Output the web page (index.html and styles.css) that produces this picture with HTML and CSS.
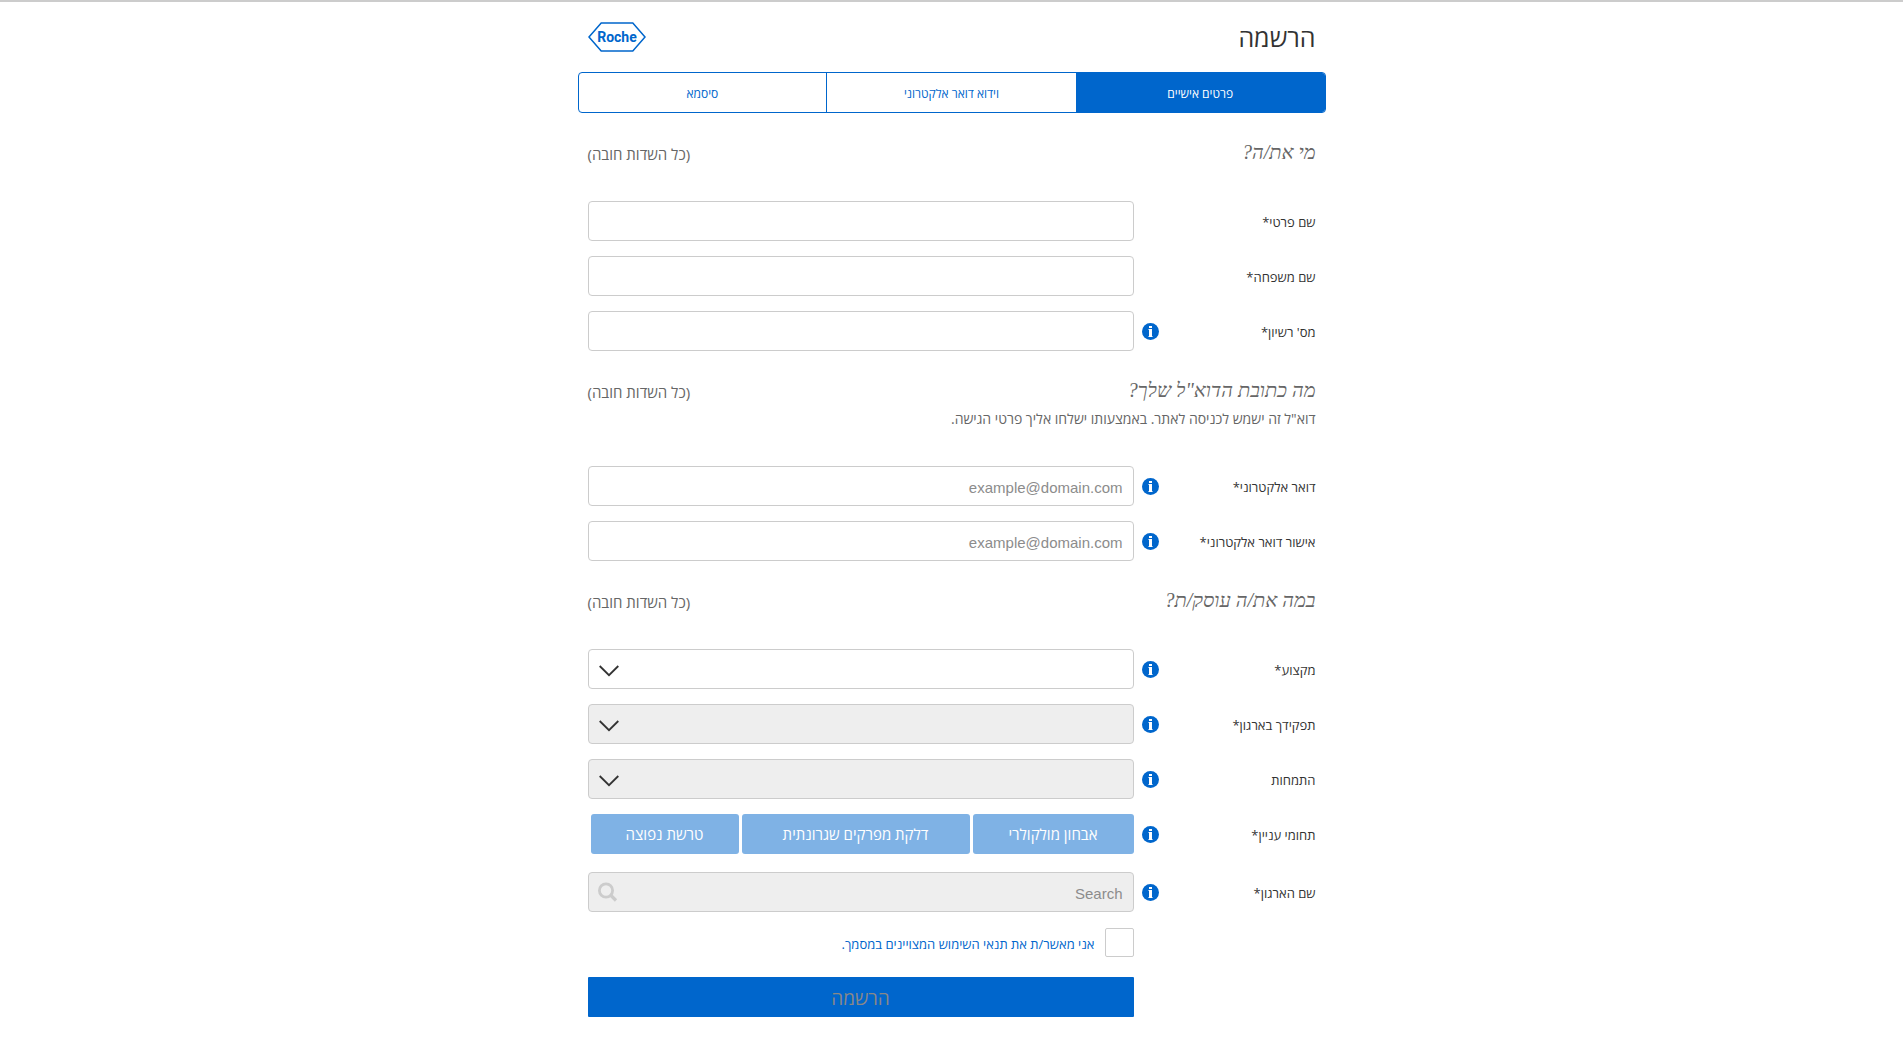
FILE: index.html
```html
<!DOCTYPE html>
<html lang="he" dir="rtl">
<head>
<meta charset="utf-8">
<meta name="viewport" content="width=device-width, initial-scale=1">
<title>הרשמה</title>
<link rel="stylesheet" href="styles.css">
</head>
<body>
<svg class="sprite" aria-hidden="true">
  <symbol id="info" viewBox="0 0 17 17">
    <circle cx="8.5" cy="8.5" r="8.5" fill="#0066cc"/>
    <path fill="#fff" d="M7 3h3v2H7zM6.500 6H10V13h.5v1H6.500v-1H7V7h-.5z"/>
  </symbol>
  <symbol id="arrow" viewBox="0 0 20 12">
    <path d="M.7 1 10 10.200 19.300 1" fill="none" stroke="#333" stroke-width="1.800"/>
  </symbol>
</svg>
<main class="page">
  <header class="top">
    <h1 class="title">הרשמה</h1>
    <svg class="logo" viewBox="0 0 58 30" role="img" aria-label="Roche">
      <path d="M1 15 13.200 1H44.800L57 15 44.800 29H13.200Z" fill="#fff" stroke="#0066cc" stroke-width="1.500"/>
      <text class="logo-text" x="29" y="20" text-anchor="middle" direction="ltr">Roche</text>
    </svg>
  </header>

  <ol class="steps">
    <li class="step step-active" aria-current="step">פרטים אישיים</li>
    <li class="step">וידוא דואר אלקטרוני</li>
    <li class="step">סיסמא</li>
  </ol>

  <form class="form">
    <section>
      <div class="section-head">
        <h2 class="section-title">מי את/ה?</h2>
        <span class="note">(כל השדות חובה)</span>
      </div>
      <div class="fields">
        <div class="row">
          <div class="row-label"><label for="first">שם פרטי*</label></div>
          <input class="control" id="first" type="text">
        </div>
        <div class="row">
          <div class="row-label"><label for="last">שם משפחה*</label></div>
          <input class="control" id="last" type="text">
        </div>
        <div class="row">
          <div class="row-label"><label for="license">מס' רשיון*</label><svg class="info"><use href="#info"/></svg></div>
          <input class="control" id="license" type="text">
        </div>
      </div>
    </section>

    <section>
      <div class="section-head">
        <h2 class="section-title">מה כתובת הדוא"ל שלך?</h2>
        <span class="note">(כל השדות חובה)</span>
        <p class="section-desc">דוא"ל זה ישמש לכניסה לאתר. באמצעותו ישלחו אליך פרטי הגישה.</p>
      </div>
      <div class="fields">
        <div class="row">
          <div class="row-label"><label for="email">דואר אלקטרוני*</label><svg class="info"><use href="#info"/></svg></div>
          <input class="control" id="email" type="email" placeholder="example@domain.com">
        </div>
        <div class="row">
          <div class="row-label"><label for="email2">אישור דואר אלקטרוני*</label><svg class="info"><use href="#info"/></svg></div>
          <input class="control" id="email2" type="email" placeholder="example@domain.com">
        </div>
      </div>
    </section>

    <section>
      <div class="section-head">
        <h2 class="section-title">במה את/ה עוסק/ת?</h2>
        <span class="note">(כל השדות חובה)</span>
      </div>
      <div class="fields">
        <div class="row">
          <div class="row-label"><label for="job">מקצוע*</label><svg class="info"><use href="#info"/></svg></div>
          <div class="control-wrap">
            <select class="control" id="job"><option></option></select>
            <svg class="arrow"><use href="#arrow"/></svg>
          </div>
        </div>
        <div class="row">
          <div class="row-label"><label for="role">תפקידך בארגון*</label><svg class="info"><use href="#info"/></svg></div>
          <div class="control-wrap">
            <select class="control" id="role" disabled><option></option></select>
            <svg class="arrow"><use href="#arrow"/></svg>
          </div>
        </div>
        <div class="row">
          <div class="row-label"><label for="field">התמחות</label><svg class="info"><use href="#info"/></svg></div>
          <div class="control-wrap">
            <select class="control" id="field" disabled><option></option></select>
            <svg class="arrow"><use href="#arrow"/></svg>
          </div>
        </div>
        <div class="row row-chips">
          <div class="row-label"><span class="label-text" id="interests">תחומי עניין*</span><svg class="info"><use href="#info"/></svg></div>
          <div class="chips" role="group" aria-labelledby="interests">
            <button class="chip" type="button">אבחון מולקולרי</button>
            <button class="chip" type="button">דלקת מפרקים שגרונתית</button>
            <button class="chip" type="button">טרשת נפוצה</button>
          </div>
        </div>
        <div class="row">
          <div class="row-label"><label for="org">שם הארגון*</label><svg class="info"><use href="#info"/></svg></div>
          <div class="control-wrap">
            <input class="control" id="org" type="text" placeholder="Search" disabled>
            <svg class="search" viewBox="0 0 20 20"><circle cx="8" cy="8.500" r="6.600" fill="none" stroke="#ccc" stroke-width="2.800"/><path d="M12.500 13l5.500 5.500" stroke="#ccc" stroke-width="3.200" fill="none"/></svg>
          </div>
        </div>
      </div>
      <div class="finish">
        <div class="terms">
          <input class="check" id="agree" type="checkbox">
          <label for="agree"><a class="terms-link" href="#terms">אני מאשר/ת את תנאי השימוש המצויינים במסמך.</a></label>
        </div>
        <button class="submit" type="submit" disabled>הרשמה</button>
      </div>
    </section>
  </form>
</main>
</body>
</html>
```
FILE: styles.css
```css
* {
  box-sizing: border-box;
}

body {
  margin: 0;
  border-top: 2px solid #ccc;
  background: #fff;
  color: #333;
  font: 14px/20px "Open Sans", "Liberation Sans", sans-serif;
}

.sprite {
  display: none;
}

.page {
  max-width: 748px;
  margin: 0 auto;
  padding-bottom: 32px;
}

.top {
  display: flex;
  align-items: center;
  justify-content: space-between;
  height: 70px;
  padding: 0 10px;
}

.title {
  margin: 0;
  font-size: 25px;
  font-weight: 400;
  line-height: 32px;
}

.logo {
  width: 58px;
  height: 30px;
}

.logo-text {
  fill: #0066cc;
  font: bold 14px Roboto, "Liberation Sans", sans-serif;
}

.steps {
  display: grid;
  grid-template-columns: repeat(3, 1fr);
  margin: 0;
  padding: 0;
  overflow: hidden;
  border: 1px solid #0066cc;
  border-radius: 4px;
  list-style: none;
}

.step {
  padding: 11px 0 8px;
  color: #0066cc;
  font-size: 12px;
  text-align: center;
}

.step + .step + .step {
  border-right: 1px solid #0066cc;
}

.step-active {
  background: #0066cc;
  color: #fff;
}

.form {
  padding: 0 10px;
}

.section-head {
  display: flex;
  flex-wrap: wrap;
  justify-content: space-between;
  padding: 24px 0 34px;
  color: #666;
}

.section-title {
  margin: 0;
  font: italic 400 20px/30px "Liberation Serif", serif;
}

.note {
  padding-top: 7px;
  font-size: 15px;
}

.section-desc {
  width: 100%;
  margin: 0;
  line-height: 27px;
}

.fields {
  display: grid;
  gap: 15px;
}

.row {
  display: grid;
  grid-template-columns: 1fr 3fr;
  align-items: center;
}

.row-chips {
  margin-bottom: 3px;
}

.row-label {
  display: flex;
  align-items: center;
  justify-content: space-between;
  padding-left: 8px;
  font-size: 13px;
}

.row-label label,
.label-text,
.terms label {
  padding-top: 2px;
}

.info {
  width: 17px;
  height: 17px;
}

.control-wrap {
  position: relative;
}

.control {
  display: block;
  width: 100%;
  height: 40px;
  padding: 2px 10px 0;
  border: 1px solid #ccc;
  border-radius: 4px;
  appearance: none;
  background: #fff;
  color: #333;
  font: 15px "Liberation Sans", Arial, sans-serif;
  text-align: right;
}

.control:disabled {
  background: #eee;
  opacity: 1;
}

.control::placeholder {
  color: #8c8c8c;
}

.arrow {
  position: absolute;
  top: 16px;
  left: 11px;
  width: 20px;
  height: 12px;
  pointer-events: none;
}

.search {
  position: absolute;
  top: 10px;
  left: 10px;
  width: 20px;
  height: 20px;
}

.chips {
  display: grid;
  grid-template-columns: 161fr 228fr 148fr;
  gap: 3px;
  padding-left: 3px;
}

.chip {
  height: 40px;
  padding: 0;
  border: 0;
  border-radius: 3px;
  background: #7fb2e5;
  color: #fff;
  font: 15px "Open Sans", "Liberation Sans", sans-serif;
  white-space: nowrap;
}

.finish {
  width: 75%;
  margin-right: 25%;
}

.terms {
  display: flex;
  align-items: center;
  gap: 10px;
  padding: 16px 0 20px;
  font-size: 13px;
}

.check {
  width: 29px;
  height: 29px;
  margin: 0;
  border: 1px solid #ccc;
  border-radius: 2px;
  appearance: none;
  background: #fff;
}

.terms-link {
  color: #0066cc;
  text-decoration: none;
}

.submit {
  display: block;
  width: 100%;
  height: 40px;
  padding: 2px 0 0;
  border: 0;
  border-radius: 1px;
  background: #0066cc;
  color: #888;
  font: 19px "Open Sans", "Liberation Sans", sans-serif;
}
```
